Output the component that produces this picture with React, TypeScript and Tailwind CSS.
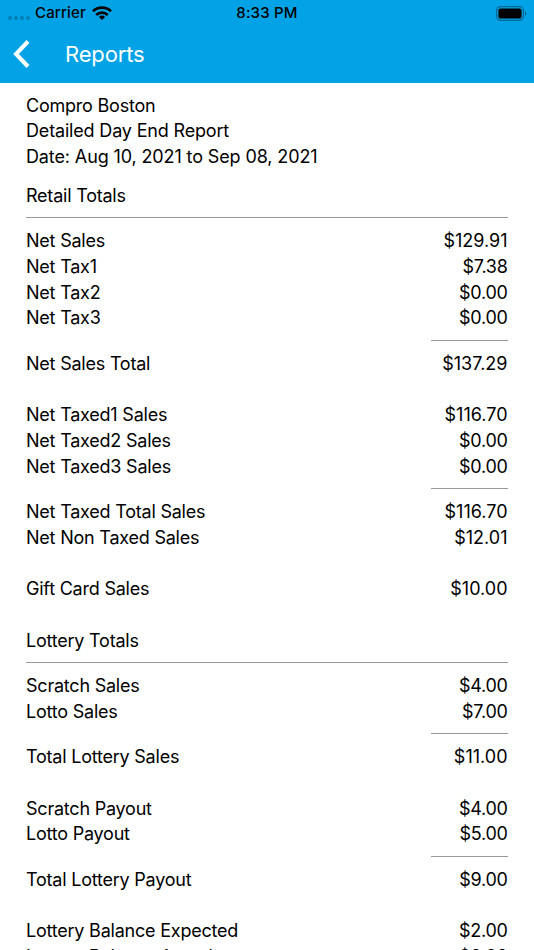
import clsx from 'clsx'

type Line =
  | { kind: 'row'; label: string; value?: string }
  | { kind: 'rule'; short?: boolean }
  | { kind: 'gap' }

const row = (label: string, value?: string): Line => ({ kind: 'row', label, value })
const rule: Line = { kind: 'rule' }
const subtotal: Line = { kind: 'rule', short: true }
const gap: Line = { kind: 'gap' }

const lines: Line[] = [
  row('Retail Totals'),
  rule,
  row('Net Sales', '$129.91'),
  row('Net Tax1', '$7.38'),
  row('Net Tax2', '$0.00'),
  row('Net Tax3', '$0.00'),
  subtotal,
  row('Net Sales Total', '$137.29'),
  gap,
  row('Net Taxed1 Sales', '$116.70'),
  row('Net Taxed2 Sales', '$0.00'),
  row('Net Taxed3 Sales', '$0.00'),
  subtotal,
  row('Net Taxed Total Sales', '$116.70'),
  row('Net Non Taxed Sales', '$12.01'),
  gap,
  row('Gift Card Sales', '$10.00'),
  gap,
  row('Lottery Totals'),
  rule,
  row('Scratch Sales', '$4.00'),
  row('Lotto Sales', '$7.00'),
  subtotal,
  row('Total Lottery Sales', '$11.00'),
  gap,
  row('Scratch Payout', '$4.00'),
  row('Lotto Payout', '$5.00'),
  subtotal,
  row('Total Lottery Payout', '$9.00'),
  gap,
  row('Lottery Balance Expected', '$2.00'),
  row('Lottery Balance Actual', '$0.00'),
]

function StatusBar() {
  return (
    <div className="grid h-[26px] grid-cols-3 items-center pl-2 pr-[7px] text-[15px] font-medium leading-[26px] text-black">
      <div className="flex items-center">
        <div className="mt-[9px] flex gap-[2px]">
          <span className="size-[4px] rounded-full bg-[#0780b4]" />
          <span className="size-[4px] rounded-full bg-[#0780b4]" />
          <span className="size-[4px] rounded-full bg-[#0780b4]" />
          <span className="size-[4px] rounded-full bg-[#0780b4]" />
        </div>
        <span className="ml-[5px] tracking-[0.15px]">Carrier</span>
        <svg className="ml-[6px]" width="20" height="14" viewBox="0 0 20 14" fill="none" stroke="currentColor" strokeWidth="2.7">
          <path d="M1 5.2a13 13 0 0 1 18 0" />
          <path d="M4.2 8.9a8.4 8.4 0 0 1 11.6 0" />
          <path d="M10 14 6.9 10.9a4.5 4.5 0 0 1 6.2 0Z" fill="currentColor" stroke="none" />
        </svg>
      </div>
      <span className="-ml-px text-center tracking-[0.2px]">8:33 PM</span>
      <svg className="justify-self-end" width="31" height="15" viewBox="0 0 31 15">
        <rect x=".6" y=".6" width="26.8" height="13.8" rx="4" fill="none" stroke="#056895" strokeWidth="1.2" />
        <rect x="2.4" y="2.4" width="23.2" height="10.2" rx="2.2" />
        <path d="M29 5c1.7.6 1.7 4.4 0 5Z" fill="#056895" />
      </svg>
    </div>
  )
}

function ReportLine({ line }: { line: Line }) {
  if (line.kind === 'gap') return <div className="h-[25.77px]" />
  if (line.kind === 'rule') {
    return (
      <div className="flex h-[19.5px] items-center justify-end pb-[1.6px]">
        <div className={clsx('h-px bg-[#999]', line.short ? 'w-[77px]' : 'w-full')} />
      </div>
    )
  }
  return (
    <div className="flex h-[25.77px] justify-between">
      <span>{line.label}</span>
      {line.value && (
        <span className={line.value.includes('1') ? 'tracking-[0px]' : 'tracking-[-0.3px]'}>{line.value}</span>
      )}
    </div>
  )
}

export default function App() {
  return (
    <div className="flex h-[950px] w-[534px] flex-col overflow-hidden bg-white font-['Inter','Liberation_Sans',sans-serif] text-black">
      <header className="h-[83px] shrink-0 bg-[#02a3e6]">
        <StatusBar />
        <div className="flex h-[57px] items-center pl-[13px] text-white">
          <svg className="-mt-[2px]" width="17" height="28" viewBox="0 0 17 28" fill="none" stroke="currentColor" strokeWidth="4">
            <path d="M15 1.5 3 14l12 12.5" />
          </svg>
          <h1 className="ml-[35px] text-[22px] tracking-[-0.15px]">Reports</h1>
        </div>
      </header>
      <main className="pl-[26px] pr-[26.5px] pt-[9.6px] text-[18px] leading-[25.77px] tracking-[-0.22px]">
        <div className="mb-[12.9px]">
          <p>Compro Boston</p>
          <p className="tracking-[-0.17px]">Detailed Day End Report</p>
          <p className="tracking-[-0.12px]">Date: Aug 10, 2021 to Sep 08, 2021</p>
        </div>
        {lines.map((line, i) => (
          <ReportLine key={i} line={line} />
        ))}
      </main>
    </div>
  )
}
